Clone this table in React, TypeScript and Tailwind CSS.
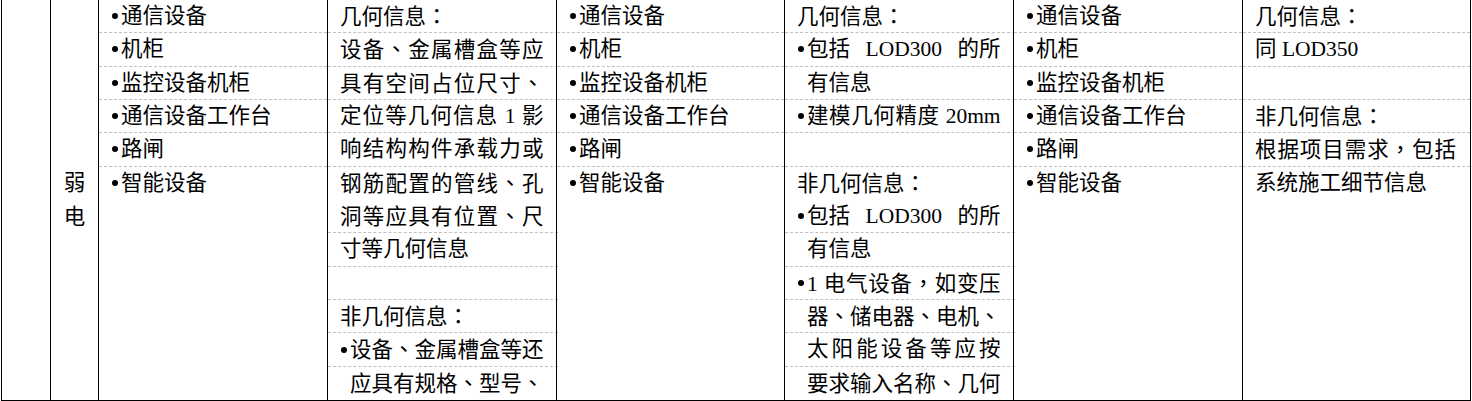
type Line = { t?: string; b?: boolean; i?: boolean; j?: boolean; split?: boolean };

const devices: Line[] = [
  { t: "通信设备", b: true },
  { t: "机柜", b: true },
  { t: "监控设备机柜", b: true },
  { t: "通信设备工作台", b: true },
  { t: "路闸", b: true },
  { t: "智能设备", b: true },
];

const lod300: Line[] = [
  { t: "几何信息：" },
  { t: "设备、金属槽盒等应", j: true },
  { t: "具有空间占位尺寸、", j: true },
  { t: "定位等几何信息 1 影", j: true },
  { t: "响结构构件承载力或", j: true },
  { t: "钢筋配置的管线、孔", j: true },
  { t: "洞等应具有位置、尺", j: true },
  { t: "寸等几何信息" },
  {},
  { t: "非几何信息：" },
  { t: "设备、金属槽盒等还", b: true, j: true },
  { t: "应具有规格、型号、", i: true, j: true },
];

const lod350: Line[] = [
  { t: "几何信息：" },
  { t: "包括 LOD300 的所", b: true, split: true },
  { t: "有信息", i: true },
  { t: "建模几何精度 20mm", b: true, j: true },
  {},
  { t: "非几何信息：" },
  { t: "包括 LOD300 的所", b: true, split: true },
  { t: "有信息", i: true },
  { t: "1 电气设备，如变压", b: true, j: true },
  { t: "器、储电器、电机、", i: true, j: true },
  { t: "太阳能设备等应按", i: true, j: true },
  { t: "要求输入名称、几何", i: true, j: true },
];

const lod400: Line[] = [
  { t: "几何信息：" },
  { t: "同 LOD350" },
  {},
  { t: "非几何信息：" },
  { t: "根据项目需求，包括", j: true },
  { t: "系统施工细节信息" },
];

const short = [0, 1, 2, 3, 4];
const long = [0, 1, 2, 3, 4, 6, 7, 8, 9, 10];

// full-width punctuation sits centred in the reference, as in the TC font
function Text({ s }: { s: string }) {
  return (
    <>
      {s.split(/([：，、])/).map((p, k) =>
        /^[：，、]$/.test(p) ? (
          <span key={k} className="font-['Noto_Sans_CJK_TC',sans-serif]">
            {p}
          </span>
        ) : (
          p
        )
      )}
    </>
  );
}

function Bullet({ hidden }: { hidden?: boolean }) {
  return (
    <span className="shrink-0 w-[10px] flex items-center">
      {!hidden && <span className="ml-px w-[6px] h-[6px] rounded-full bg-black" />}
    </span>
  );
}

function Row({ line, dashed }: { line?: Line; dashed: boolean }) {
  const justify = line?.j ? "text-justify [text-align-last:justify]" : "";
  return (
    <div
      className={`flex items-center pl-3 pr-[14px] whitespace-nowrap ${
        dashed ? "border-b border-dashed border-[#c0c0c0]" : ""
      }`}
    >
      {line?.t && (
        <div className="flex w-full">
          {line.b && <Bullet />}
          {line.i && <Bullet hidden />}
          {line.split ? (
            <span className="flex-1 flex justify-between">
              {line.t.split(" ").map((p, k) => (
                <span key={k}>{p}</span>
              ))}
            </span>
          ) : (
            <span className={`flex-1 ${justify}`}>
              <Text s={line.t} />
            </span>
          )}
        </div>
      )}
    </div>
  );
}

function Column({ lines, dashed, className }: { lines: Line[]; dashed: number[]; className: string }) {
  return (
    <div className={`grid grid-rows-12 h-[400px] border-l border-black ${className}`}>
      {Array.from({ length: 12 }).map((_, i) => (
        <Row key={i} line={lines[i]} dashed={dashed.includes(i)} />
      ))}
    </div>
  );
}

export default function App() {
  return (
    <div className="w-[1472px] h-[401px] bg-white text-black text-[21.5px] font-['Liberation_Serif','Noto_Sans_CJK_SC',serif] overflow-hidden">
      <div className="ml-px flex w-fit border-b border-black">
        <div className="w-[49px] h-[400px] border-l border-black" />
        <div className="w-[48px] h-[400px] grid grid-rows-12 border-l border-black">
          <div className="row-start-6 flex items-center justify-center">弱</div>
          <div className="row-start-7 flex items-center justify-center">电</div>
        </div>
        <Column lines={devices} dashed={short} className="w-[229px]" />
        <Column lines={lod300} dashed={long} className="w-[229px]" />
        <Column lines={devices} dashed={short} className="w-[228px]" />
        <Column lines={lod350} dashed={long} className="w-[229px]" />
        <Column lines={devices} dashed={short} className="w-[229px]" />
        <Column lines={lod400} dashed={short} className="w-[229px] border-r" />
      </div>
    </div>
  );
}
